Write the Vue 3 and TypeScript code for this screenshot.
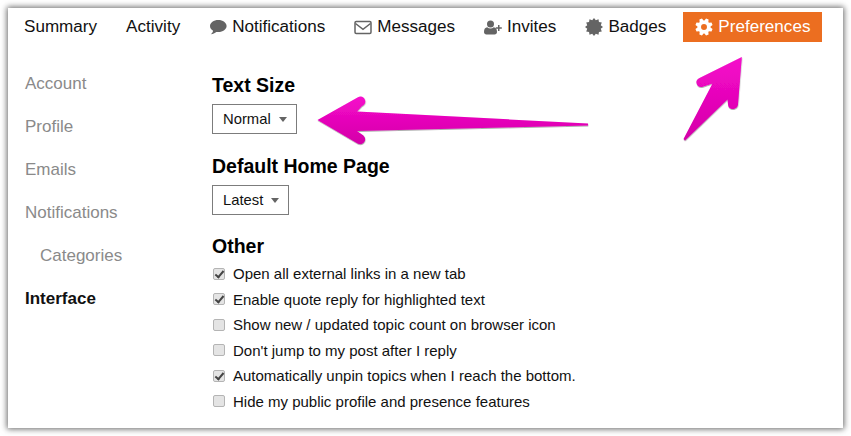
<template>
  <div class="panel">
    <nav class="tabs">
      <a v-for="t in tabs" :key="t.label" class="tab" :class="{ active: t.label === 'Preferences' }">
        <svg v-if="t.icon === 'comment'" class="ico" width="18" height="17" viewBox="0 0 18 17">
          <path d="M9.3 1C4.7 1 1 3.7 1 7c0 1.9 1.200 3.600 3.100 4.700C3.800 13.100 3 14.200 1.800 15.300c2.200-.2 4.200-1.200 5.500-2.400.6.100 1.300.1 2 .1 4.600 0 8.300-2.700 8.300-6S13.900 1 9.300 1z" />
        </svg>
        <svg v-else-if="t.icon === 'envelope'" class="ico" width="18" height="15" viewBox="0 0 18 15">
          <rect x="1" y="1.500" width="16" height="12" rx="1.200" fill="none" stroke="#646464" stroke-width="1.500" />
          <path d="M1.500 3.500 9 9.300 16.500 3.500" fill="none" stroke="#646464" stroke-width="1.500" />
        </svg>
        <svg v-else-if="t.icon === 'user'" class="ico" width="18" height="15" viewBox="0 0 18 15">
          <circle cx="6.500" cy="4" r="3.500" />
          <path d="M0 12c0-3 1.200-4.600 3.200-4.800 1 .8 2.100 1.200 3.300 1.200s2.300-.4 3.300-1.200c2 .2 3.200 1.800 3.200 4.800 0 1.500-1 2.500-2.400 2.500H2.400C1 14.500 0 13.500 0 12z" />
          <path d="M14 5h1.500v2.200h2.300v1.500h-2.300V11H14V8.700h-2.200V7.200H14z" />
        </svg>
        <svg v-else-if="t.icon === 'badge'" class="ico" width="18" height="18" viewBox="0 0 18 18">
          <path :d="badgePath" />
        </svg>
        <svg v-else-if="t.icon === 'gear'" class="ico" width="18" height="18" viewBox="0 0 17 17">
          <path :d="gearPath" fill="#fff" fill-rule="evenodd" />
        </svg>
        {{ t.label }}
      </a>
    </nav>

    <div class="body">
      <ul class="side">
        <li v-for="s in sideItems" :key="s.label" :class="{ sub: s.sub, current: s.current }">{{ s.label }}</li>
      </ul>

      <div class="main">
        <section class="group">
          <h3>Text Size</h3>
          <div class="drop">Normal<i class="caret"></i></div>
        </section>
        <section class="group">
          <h3>Default Home Page</h3>
          <div class="drop">Latest<i class="caret"></i></div>
        </section>
        <section class="group other">
          <h3>Other</h3>
          <label v-for="c in options" :key="c.text" class="opt">
            <input type="checkbox" :checked="c.on" />
            <span>{{ c.text }}</span>
          </label>
        </section>
      </div>
    </div>

    <svg class="arrows" width="851" height="436" viewBox="0 0 851 436">
      <defs>
        <linearGradient id="pink" x1="0" y1="0" x2="0" y2="1">
          <stop offset="0" stop-color="#f60acb" />
          <stop offset="1" stop-color="#d400a8" />
        </linearGradient>
        <filter id="sh" x="-10%" y="-10%" width="120%" height="130%">
          <feDropShadow dx="0.300" dy="0.800" stdDeviation="0.500" flood-color="#000" flood-opacity="0.400" />
        </filter>
      </defs>
      <path
        fill="url(#pink)"
        filter="url(#sh)"
        d="M317.500 120 357.500 97.500C361 95.500 364 97 365 100 365.800 102.500 365 104.500 362 106L357 111.500 588 123.500V125.500L357 131 362 134.500C365 136.500 366 139 364.500 141.500 363 144 360.500 145 357.500 143.500Z"
      />
      <path
        fill="url(#pink)"
        filter="url(#sh)"
        d="M741.800 57 738 104.500C737.700 107.500 735 109 733 109 730 109 728 107 728 104L727.500 99.500 685 140.500 683.500 139 712.500 83.500 702 87C699 87.500 697 85.500 696.500 83 696 81 697 79 699.500 78Z"
      />
    </svg>
  </div>
</template>

<script setup lang="ts">
type Tab = { label: string; icon?: string };

const tabs: Tab[] = [
  { label: "Summary" },
  { label: "Activity" },
  { label: "Notifications", icon: "comment" },
  { label: "Messages", icon: "envelope" },
  { label: "Invites", icon: "user" },
  { label: "Badges", icon: "badge" },
  { label: "Preferences", icon: "gear" },
];

const sideItems = [
  { label: "Account" },
  { label: "Profile" },
  { label: "Emails" },
  { label: "Notifications" },
  { label: "Categories", sub: true },
  { label: "Interface", current: true },
];

const options = [
  { text: "Open all external links in a new tab", on: true },
  { text: "Enable quote reply for highlighted text", on: true },
  { text: "Show new / updated topic count on browser icon", on: false },
  { text: "Don't jump to my post after I reply", on: false },
  { text: "Automatically unpin topics when I reach the bottom.", on: true },
  { text: "Hide my public profile and presence features", on: false },
];

function radial(cx: number, cy: number, r: number, a: number) {
  return `${(cx + r * Math.cos(a)).toFixed(2)} ${(cy + r * Math.sin(a)).toFixed(2)}`;
}

// starburst for the badge icon
const badgePath = (() => {
  const n = 12;
  let d = "";
  for (let i = 0; i < n * 2; i++) {
    const r = i % 2 ? 7.000 : 9.000;
    d += (i ? "L" : "M") + radial(9, 9, r, (i * Math.PI) / n);
  }
  return d + "Z";
})();

// cog with a hole
const gearPath = (() => {
  const n = 8;
  const step = (Math.PI * 2) / n;
  let d = "";
  for (let i = 0; i < n; i++) {
    const a = i * step + step / 2;
    d += (i ? "L" : "M") + radial(8.500, 8.500, 6.200, a - step * 0.42);
    d += "L" + radial(8.500, 8.500, 8.300, a - step * 0.2);
    d += "L" + radial(8.500, 8.500, 8.300, a + step * 0.2);
    d += "L" + radial(8.500, 8.500, 6.200, a + step * 0.42);
  }
  d += "Z M11.300 8.500a2.800 2.800 0 1 0-5.600 0a2.800 2.800 0 1 0 5.600 0Z";
  return d;
})();
</script>

<style scoped>
.panel {
  position: relative;
  width: 835px;
  height: 420px;
  margin: 8px;
  padding: 4px 0 0 4px;
  box-sizing: border-box;
  background: #fff;
  box-shadow: 0 0 6px 1px rgba(0, 0, 0, 0.6);
  font-family: "Liberation Sans", Arial, sans-serif;
  color: #111;
}

.tabs {
  display: flex;
  gap: 5px;
}

.tab {
  display: flex;
  align-items: center;
  gap: 5px;
  height: 30px;
  padding: 0 12px;
  font-size: 17.080px;
  color: #111;
}

.tab.active {
  background: #ec6e20;
  color: #fff;
}

.ico {
  fill: #646464;
  flex: none;
}

.body {
  display: flex;
  padding-top: 20px;
}

.side {
  list-style: none;
  margin: 0;
  padding: 0 0 0 13px;
  width: 200px;
  box-sizing: border-box;
  font-size: 17px;
  color: #8a8a8a;
}

.side li {
  height: 43px;
  line-height: 43px;
}

.side .sub {
  padding-left: 15px;
}

.side .current {
  color: #111;
  font-weight: 700;
}

.main {
  display: flex;
  flex-direction: column;
  padding-top: 11px;
}

h3 {
  margin: 0;
  font-size: 19.500px;
  line-height: 24px;
  font-weight: 700;
  color: #000;
}

.group {
  margin-bottom: 20px;
}

.other {
  margin-top: -1px;
}

.drop {
  display: flex;
  width: fit-content;
  align-items: center;
  height: 30px;
  margin-top: 7px;
  padding: 0 9px 1px 10px;
  box-sizing: border-box;
  border: 1px solid #7c7c7c;
  font-size: 14.800px;
  color: #111;
}

.caret {
  width: 0;
  height: 0;
  margin: 1px 0 0 8px;
  border-left: 4.500px solid transparent;
  border-right: 4.500px solid transparent;
  border-top: 5px solid #646464;
}

.other h3 {
  margin-bottom: 3px;
}

.opt {
  display: flex;
  align-items: center;
  height: 25.500px;
  font-size: 15px;
  color: #111;
}

.opt input {
  appearance: none;
  position: relative;
  flex: none;
  width: 12px;
  height: 12px;
  margin: 0 8px 0 1px;
  box-sizing: border-box;
  background: #e4e4e4;
  border: 1px solid #b4b4b4;
  border-radius: 2px;
}

.opt input:checked::after {
  content: "";
  position: absolute;
  left: 3px;
  top: 0;
  width: 3px;
  height: 7px;
  border: solid #444;
  border-width: 0 2px 2px 0;
  transform: rotate(40deg);
}

.arrows {
  position: absolute;
  left: -8px;
  top: -8px;
  pointer-events: none;
}
</style>
